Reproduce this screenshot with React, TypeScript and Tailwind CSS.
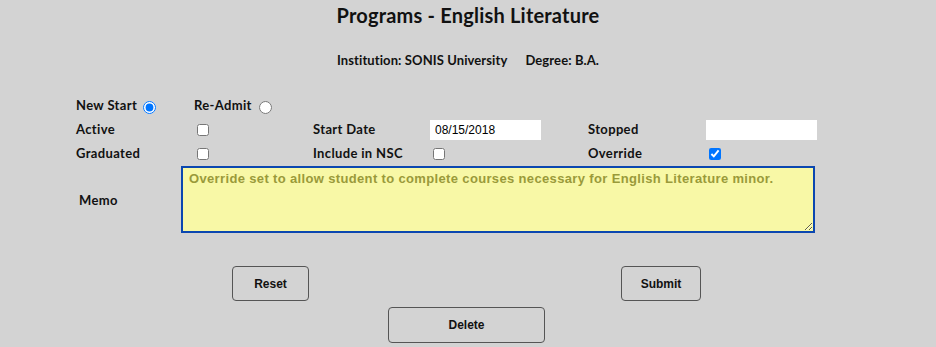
import React from "react";

const LABEL = "font-['Lato','DejaVu_Sans',sans-serif] font-bold text-[13px] tracking-[0.35px] text-[#111]";

const Label = ({ text, w }: { text: string; w: string }) => (
  <div className={`${LABEL} ${w} shrink-0`}>{text}</div>
);

const Box = ({ checked = false }: { checked?: boolean }) => (
  <input type="checkbox" defaultChecked={checked} className="m-0 h-[12px] w-[12px]" />
);

export default function App() {
  return (
    <div className="w-[936px] h-[347px] bg-[#d3d3d3] overflow-hidden flex flex-col">
      <h1 className="text-center pt-[4px] h-[30px] font-['Lato','DejaVu_Sans',sans-serif] font-bold text-[20px] tracking-[0.2px] leading-[23px] text-[#111]">
        Programs - English Literature
      </h1>
      <div className="mt-[22px] h-[16px] flex justify-center gap-[18px] font-['Lato','DejaVu_Sans',sans-serif] font-bold text-[13px] tracking-[0.1px] leading-[16px] text-[#111]">
        <span>Institution: SONIS University</span>
        <span>Degree: B.A.</span>
      </div>

      <div className="mt-[26px] pl-[76px] flex flex-col">
        {/* row 1 */}
        <div className="h-[24px] flex items-center">
          <Label text="New Start" w="w-[67px]" />
          <input type="radio" name="st" defaultChecked className="m-0 h-[13px] w-[13px] mt-[3px]" />
          <div className="w-[38px] shrink-0" />
          <Label text="Re-Admit" w="w-[65px]" />
          <input type="radio" name="st" className="m-0 h-[13px] w-[13px] mt-[3px]" />
        </div>

        {/* row 2 */}
        <div className="h-[24px] flex items-center">
          <Label text="Active" w="w-[121px]" />
          <div className="w-[116px] shrink-0 flex"><Box /></div>
          <Label text="Start Date" w="w-[117px]" />
          <input
            type="text"
            defaultValue="08/15/2018"
            className="w-[111px] h-[20px] bg-white px-[5px] font-['Liberation_Sans',Arial,sans-serif] text-[12px] text-black outline-none"
          />
          <div className="w-[47px] shrink-0" />
          <Label text="Stopped" w="w-[118px]" />
          <input type="text" className="w-[111px] h-[20px] bg-white outline-none" />
        </div>

        {/* row 3 */}
        <div className="h-[24px] flex items-center">
          <Label text="Graduated" w="w-[121px]" />
          <div className="w-[116px] shrink-0 flex"><Box /></div>
          <Label text="Include in NSC" w="w-[120px]" />
          <div className="w-[155px] shrink-0 flex"><Box /></div>
          <Label text="Override" w="w-[121px]" />
          <Box checked />
        </div>

        {/* memo */}
        <div className="flex items-center">
          <div className="w-[105px] shrink-0 pl-[3px] pb-[2px]">
            <span className={LABEL}>Memo</span>
          </div>
          <textarea
            defaultValue="Override set to allow student to complete courses necessary for English Literature minor."
            className="w-[634px] h-[67px] bg-[#f8f8a6] border-2 border-[#0b47b0] px-[6px] py-[4px] font-['Liberation_Sans',Arial,sans-serif] font-bold text-[13px] tracking-[0.35px] leading-[14px] text-[#9a9a3a] outline-none"
          />
        </div>
      </div>

      <div className="mt-[33px] flex pl-[232px]">
        <button className="w-[77px] h-[35px] border border-[#555] rounded-[4px] font-['Liberation_Sans',Arial,sans-serif] font-bold text-[12px] text-[#111]">
          Reset
        </button>
        <div className="w-[312px]" />
        <button className="w-[80px] h-[35px] border border-[#555] rounded-[4px] font-['Liberation_Sans',Arial,sans-serif] font-bold text-[12px] text-[#111]">
          Submit
        </button>
      </div>
      <div className="mt-[6px] flex pl-[388px]">
        <button className="w-[157px] h-[36px] border border-[#555] rounded-[4px] font-['Liberation_Sans',Arial,sans-serif] font-bold text-[12px] text-[#111]">
          Delete
        </button>
      </div>
    </div>
  );
}
